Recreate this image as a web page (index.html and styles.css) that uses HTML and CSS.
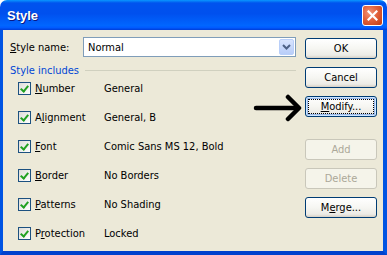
FILE: index.html
```html
<!DOCTYPE html>
<html lang="en">
<head>
    <meta charset="UTF-8">
    <meta name="viewport" content="width=device-width, initial-scale=1.0">
    <title>Style</title>
    <link rel="stylesheet" href="styles.css">
</head>
<body>
    <div id="window">
        <div class="titlebar">
            <span class="title">Style</span>
            <button class="close" type="button" aria-label="Close">
                <svg width="11" height="11" viewBox="0 0 11 11">
                    <path d="M1.5 1.5 L9.5 9.5 M9.5 1.5 L1.5 9.5" stroke="#fff" stroke-width="2.2" stroke-linecap="square"/>
                </svg>
            </button>
        </div>

        <div class="client">
            <div class="main">
                <div class="name-row">
                    <label class="name-label" for="styleName"><u>S</u>tyle name:</label>
                    <div class="combo">
                        <span id="styleName" class="combo-text">Normal</span>
                        <span class="combo-arrow">
                            <svg width="9" height="6" viewBox="0 0 9 6">
                                <path d="M1 1 L4.5 4.5 L8 1" fill="none" stroke="#4d6185" stroke-width="2"/>
                            </svg>
                        </span>
                    </div>
                </div>

                <div class="group-head">
                    <span>Style includes</span>
                    <div class="group-line"></div>
                </div>

                <div class="row">
                    <span class="check"></span>
                    <span class="row-label"><u>N</u>umber</span>
                    <span class="row-value">General</span>
                </div>
                <div class="row">
                    <span class="check"></span>
                    <span class="row-label">A<u>l</u>ignment</span>
                    <span class="row-value">General, B</span>
                </div>
                <div class="row">
                    <span class="check"></span>
                    <span class="row-label"><u>F</u>ont</span>
                    <span class="row-value">Comic Sans MS 12, Bold</span>
                </div>
                <div class="row">
                    <span class="check"></span>
                    <span class="row-label"><u>B</u>order</span>
                    <span class="row-value">No Borders</span>
                </div>
                <div class="row">
                    <span class="check"></span>
                    <span class="row-label"><u>P</u>atterns</span>
                    <span class="row-value">No Shading</span>
                </div>
                <div class="row">
                    <span class="check"></span>
                    <span class="row-label">P<u>r</u>otection</span>
                    <span class="row-value">Locked</span>
                </div>
            </div>

            <div class="side">
                <button class="btn" type="button">OK</button>
                <button class="btn" type="button">Cancel</button>
                <button class="btn focused" type="button"><span class="focus-ring"><u>M</u>odify...</span></button>
                <button class="btn gap" type="button" disabled>Add</button>
                <button class="btn" type="button" disabled>Delete</button>
                <button class="btn" type="button">M<u>e</u>rge...</button>
            </div>
        </div>

        <svg class="pointer" width="54" height="30" viewBox="0 0 54 30">
            <path d="M4 14 L46 14" stroke="#000" stroke-width="4.5" stroke-linecap="round"/>
            <path d="M36 3 L47 14 L36 25" fill="none" stroke="#000" stroke-width="4.5" stroke-linecap="round" stroke-linejoin="round"/>
        </svg>
    </div>
</body>
</html>
```

FILE: styles.css
```css
body {
    margin: 0;
    padding: 0;
    background-color: #fff;
    font-family: "DejaVu Sans Condensed", "Liberation Sans", sans-serif;
    font-size: 11px;
    color: #000;
}

#window {
    position: relative;
    width: 387px;
    height: 255px;
    display: flex;
    flex-direction: column;
}

.titlebar {
    height: 30px;
    flex: none;
    display: flex;
    align-items: center;
    justify-content: space-between;
    padding: 0 4px 0 7px;
    border-radius: 7px 7px 0 0;
    background: linear-gradient(#0997ff 0%, #0053ee 10%, #0050ee 45%, #0066ff 85%, #005bff 92%, #003dd7 100%);
    box-sizing: border-box;
}

.title {
    color: #fff;
    font-family: "Liberation Sans", sans-serif;
    font-weight: bold;
    font-size: 13px;
    text-shadow: 1px 1px #0a1883;
    margin-top: 1px;
}

.close {
    width: 21px;
    height: 21px;
    padding: 0;
    margin-top: 1px;
    border: 1px solid #fff;
    border-radius: 3px;
    background: radial-gradient(circle at 35% 35%, #f0957a 0%, #e2613b 45%, #c13a10 100%);
    display: flex;
    align-items: center;
    justify-content: center;
}

.client {
    flex: 1;
    display: flex;
    background-color: #ece9d8;
    border-left: 3px solid #0054e3;
    border-right: 4px solid #0054e3;
    border-bottom: 4px solid #0041cd;
    padding: 7px 0 0 7px;
}

.main {
    width: 286px;
}

.name-row {
    display: flex;
    align-items: center;
    height: 20px;
}

.name-label {
    width: 73px;
}

.combo {
    width: 213px;
    height: 20px;
    box-sizing: border-box;
    border: 1px solid #7f9db9;
    background-color: #fff;
    display: flex;
    align-items: center;
    justify-content: space-between;
    padding: 1px;
}

.combo-text {
    padding-left: 3px;
}

.combo-arrow {
    width: 15px;
    height: 16px;
    box-sizing: border-box;
    border: 1px solid #b9cff9;
    border-radius: 2px;
    background: linear-gradient(#d8e4fd, #b8cdf8);
    display: flex;
    align-items: center;
    justify-content: center;
}

.group-head {
    display: flex;
    align-items: center;
    height: 14px;
    margin-top: 6px;
    color: #0046d5;
}

.group-line {
    flex: 1;
    height: 1px;
    margin-left: 6px;
    background-color: #d0d0bf;
}

.row {
    display: flex;
    align-items: center;
    height: 13px;
    margin-top: 16px;
    padding-left: 8px;
}

.group-head + .row {
    margin-top: 5px;
}

.check {
    position: relative;
    width: 13px;
    height: 13px;
    box-sizing: border-box;
    border: 1px solid #1c5180;
    background: linear-gradient(135deg, #dcdcd7, #fff);
    margin-right: 4px;
}

.check::after {
    content: "";
    position: absolute;
    left: 3px;
    top: 1px;
    width: 3px;
    height: 6px;
    border-right: 2px solid #21a121;
    border-bottom: 2px solid #21a121;
    transform: rotate(40deg);
}

.row-label {
    width: 69px;
}

.side {
    margin-left: 9px;
    padding-top: 1px;
    display: flex;
    flex-direction: column;
    gap: 8px;
}

.btn {
    width: 72px;
    height: 21px;
    padding: 0;
    font-family: inherit;
    font-size: 11px;
    color: #000;
    border: 1px solid #003c74;
    border-radius: 3px;
    background: linear-gradient(#fff 0%, #f6f6f2 50%, #ecebe6 85%, #d6d0c5 100%);
}

.btn.focused {
    box-shadow: inset 0 0 0 1px #cee7ff, inset 0 0 0 2px #98b8ea;
    display: flex;
    align-items: center;
    justify-content: center;
}

.focus-ring {
    width: 64px;
    height: 13px;
    line-height: 13px;
    border: 1px dotted #000;
}

.btn.gap {
    margin-top: 14px;
}

.btn:disabled {
    color: #aca899;
    border-color: #c9c7ba;
    background: #f5f4ea;
}

.pointer {
    position: absolute;
    left: 252px;
    top: 94px;
}
```
